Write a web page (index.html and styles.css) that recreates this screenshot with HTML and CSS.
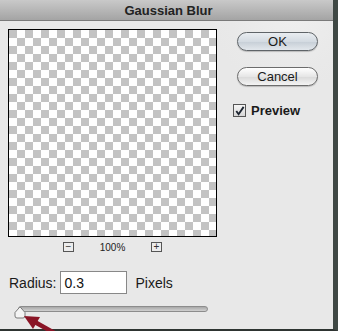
FILE: index.html
```html
<!DOCTYPE html>
<html lang="en">
<head>
    <meta charset="UTF-8">
    <title>Gaussian Blur</title>
    <link rel="stylesheet" href="styles.css">
</head>
<body>
    <div class="window">
        <div class="title-bar">Gaussian Blur</div>
        <div class="dialog">
            <div class="left-col">
                <div class="preview"></div>
                <div class="zoom-row">
                    <span class="zoom-button">−</span>
                    <span class="zoom-value">100%</span>
                    <span class="zoom-button">+</span>
                </div>
                <div class="radius-row">
                    <span class="label">Radius:</span>
                    <span class="field">0.3</span>
                    <span class="label unit">Pixels</span>
                </div>
                <div class="slider">
                    <div class="track"></div>
                    <svg class="thumb" width="12" height="13" viewBox="0 0 12 13">
                        <path d="M6 0.8 L11 6.5 L11 10 Q11 12 9 12 L3 12 Q1 12 1 10 L1 6.5 Z" fill="#f4f4f4" stroke="#7a7a7a" stroke-width="1"/>
                    </svg>
                </div>
            </div>
            <div class="right-col">
                <div class="button default">OK</div>
                <div class="button">Cancel</div>
                <div class="check-row">
                    <span class="checkbox">
                        <svg width="12" height="12" viewBox="0 0 12 12">
                            <path d="M2.5 6 L5 9.5 L10.5 1.5" fill="none" stroke="#1c2430" stroke-width="2"/>
                        </svg>
                    </span>
                    <span class="check-label">Preview</span>
                </div>
            </div>
        </div>
        <!-- red annotation arrow laid over the slider -->
        <svg class="arrow" width="60" height="30" viewBox="0 0 60 30">
            <path d="M33 20 L58 34" stroke="#8a1526" stroke-width="4.5" fill="none"/>
            <path d="M24 15 L40 16 L33 28 Z" fill="#8a1526"/>
        </svg>
    </div>
</body>
</html>
```

FILE: styles.css
```css
body {
    margin: 0;
    background: #3f4844;
    font-family: "Liberation Sans", Arial, sans-serif;
}
.window {
    position: relative;
    width: 333px;
    height: 329px;
    border-right: 5px solid #3f4844;
    border-bottom: 2px solid #2e3431;
    background: #e8e8e8;
    display: flex;
    flex-direction: column;
}
.title-bar {
    height: 20px;
    line-height: 21px;
    text-align: center;
    font-size: 13px;
    font-weight: bold;
    color: #222;
    padding-left: 4px;
    background: linear-gradient(#c9c9c9, #a4a4a4);
    border-bottom: 1px solid #7a7a7a;
}
.dialog {
    display: flex;
    flex: 1;
    background: radial-gradient(circle at 290px -10px, #efefef 0, #e9e9e9 60px, #e8e8e8 80px);
}
.left-col {
    width: 229px;
    padding: 8px 0 0 8px;
    display: flex;
    flex-direction: column;
}
.preview {
    width: 207px;
    height: 206px;
    border: 1px solid #000;
    background-color: #fff;
    background-image:
        linear-gradient(45deg, #c3c3c3 25%, transparent 25%, transparent 75%, #c3c3c3 75%),
        linear-gradient(45deg, #c3c3c3 25%, transparent 25%, transparent 75%, #c3c3c3 75%);
    background-size: 16px 16px;
    background-position: 8px 0, 0 8px;
}
.zoom-row {
    display: flex;
    align-items: center;
    height: 10px;
    margin-top: 5px;
    padding-left: 55px;
}
.zoom-button {
    width: 9px;
    height: 8px;
    border: 1px solid #555;
    font-size: 10px;
    line-height: 8px;
    text-align: center;
    color: #333;
    background: #ececec;
}
.zoom-value {
    width: 77px;
    text-align: center;
    font-size: 10px;
    color: #222;
}
.radius-row {
    display: flex;
    align-items: center;
    margin-top: 18px;
    height: 25px;
    padding-left: 1px;
}
.label {
    font-size: 14px;
    color: #1a1a1a;
}
.field {
    width: 62px;
    height: 21px;
    margin-left: 4px;
    padding-left: 3px;
    border: 1px solid #888;
    background: #fff;
    font-size: 14px;
    line-height: 22px;
    color: #111;
}
.unit {
    margin-left: 8px;
}
.slider {
    position: relative;
    margin-top: 11px;
    height: 14px;
}
.track {
    margin-left: 10px;
    width: 188px;
    height: 4px;
    border: 1px solid #8c8c8c;
    border-radius: 3px;
    background: linear-gradient(#a8a8a8, #d0d0d0);
}
.thumb {
    position: absolute;
    left: 6px;
    top: 0;
}
.right-col {
    padding-top: 11px;
    display: flex;
    flex-direction: column;
}
.button {
    width: 79px;
    height: 17px;
    border: 1px solid #6c6c6c;
    border-radius: 10px;
    text-align: center;
    font-size: 13px;
    line-height: 18px;
    color: #1a1a1a;
    background: linear-gradient(#ffffff, #e6e6e6 50%, #d9d9d9 51%, #f4f4f4);
    box-shadow: 0 1px 1px rgba(0, 0, 0, 0.2);
    margin-bottom: 16px;
}
.button.default {
    background: linear-gradient(#e9edf1, #d4dbe2 50%, #c6ced6 51%, #e2e7ec);
    border-color: #5f6468;
}
.check-row {
    display: flex;
    align-items: center;
    margin-left: -4px;
    margin-top: 1px;
}
.checkbox {
    width: 11px;
    height: 11px;
    border: 1px solid #555;
    background: linear-gradient(#f6f6f6, #d6d6d6);
    display: flex;
    margin-right: 5px;
}
.check-label {
    font-size: 13px;
    font-weight: bold;
    color: #1a1a1a;
}
.arrow {
    position: absolute;
    left: 0;
    top: 301px;
}
```
